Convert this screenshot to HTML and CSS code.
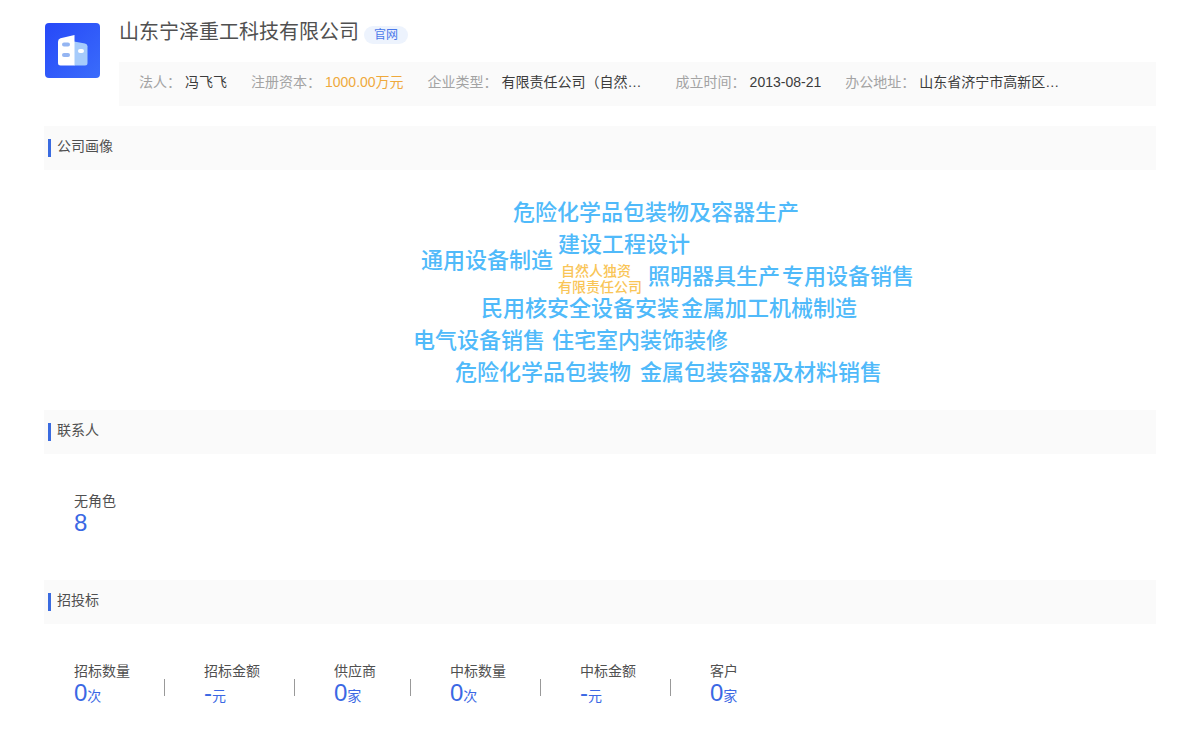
FILE: index.html
```
<!DOCTYPE html>
<html lang="zh-CN">
<head>
<meta charset="utf-8">
<title>山东宁泽重工科技有限公司</title>
<link rel="stylesheet" href="styles.css">
</head>
<body>
<main class="page">
  <header class="company">
    <svg class="logo" viewBox="0 0 55 55" aria-hidden="true">
      <defs>
        <linearGradient id="logo-bg" x1="0" y1="0" x2="1" y2="1">
          <stop offset="0" stop-color="#2648f8"/>
          <stop offset="1" stop-color="#3a6cfb"/>
        </linearGradient>
      </defs>
      <rect width="55" height="55" rx="4" fill="url(#logo-bg)"/>
      <path d="M29 18.500L40 20.500Q42.500 21 42.500 23.500V40Q42.500 42.500 40 42.500H29Z" fill="#a6cbfb"/>
      <path d="M29.500 12V42.500H15.500Q13 42.500 13 40V18.500Q13 16 15.500 15.300Z" fill="#fff"/>
      <rect x="17" y="19.500" width="8" height="4" rx="2" fill="#94b5f2"/>
      <rect x="17" y="30" width="8" height="4" rx="2" fill="#94b5f2"/>
      <rect x="33" y="26" width="6" height="4" rx="2" fill="#fff"/>
    </svg>
    <div class="company-main">
      <div class="company-title">
        <h1 class="company-name">山东宁泽重工科技有限公司</h1>
        <a class="site-tag" href="#">官网</a>
      </div>
      <dl class="facts">
        <div class="fact"><dt>法人：</dt><dd>冯飞飞</dd></div>
        <div class="fact"><dt>注册资本：</dt><dd class="money">1000.00万元</dd></div>
        <div class="fact"><dt>企业类型：</dt><dd class="wide">有限责任公司（自然…</dd></div>
        <div class="fact"><dt>成立时间：</dt><dd>2013-08-21</dd></div>
        <div class="fact"><dt>办公地址：</dt><dd class="wide">山东省济宁市高新区…</dd></div>
      </dl>
    </div>
  </header>

  <section>
    <h2 class="section-title">公司画像</h2>
    <div class="cloud-wrap">
      <div class="cloud">
        <span class="word w1">危险化学品包装物及容器生产</span>
        <span class="word w2">建设工程设计</span>
        <span class="word w3">通用设备制造</span>
        <span class="word minor w4">自然人独资</span>
        <span class="word minor w5">有限责任公司</span>
        <span class="word w6">照明器具生产</span>
        <span class="word w7">专用设备销售</span>
        <span class="word w8">民用核安全设备安装</span>
        <span class="word w9">金属加工机械制造</span>
        <span class="word w10">电气设备销售</span>
        <span class="word w11">住宅室内装饰装修</span>
        <span class="word w12">危险化学品包装物</span>
        <span class="word w13">金属包装容器及材料销售</span>
      </div>
    </div>
  </section>

  <section>
    <h2 class="section-title">联系人</h2>
    <dl class="stats">
      <div class="stat"><dt>无角色</dt><dd>8</dd></div>
    </dl>
  </section>

  <section>
    <h2 class="section-title">招投标</h2>
    <dl class="stats">
      <div class="stat"><dt>招标数量</dt><dd>0<small>次</small></dd></div>
      <div class="stat"><dt>招标金额</dt><dd>-<small>元</small></dd></div>
      <div class="stat"><dt>供应商</dt><dd>0<small>家</small></dd></div>
      <div class="stat"><dt>中标数量</dt><dd>0<small>次</small></dd></div>
      <div class="stat"><dt>中标金额</dt><dd>-<small>元</small></dd></div>
      <div class="stat"><dt>客户</dt><dd>0<small>家</small></dd></div>
    </dl>
  </section>
</main>
</body>
</html>
```
FILE: styles.css
```
* {
  box-sizing: border-box;
}

body {
  margin: 0;
  background: #fff;
  color: #505050;
  font: 14px/20px "Liberation Sans", "Noto Sans CJK SC", sans-serif;
}

h1, h2, dl, dt, dd {
  margin: 0;
  font-weight: inherit;
}

.page {
  padding: 16px 44px 0;
}

.company {
  display: flex;
  gap: 19px;
  margin-bottom: 20px;
}

.logo {
  flex: none;
  width: 55px;
  height: 55px;
  margin: 7px 0 0 1px;
}

.company-main {
  flex: 1;
  min-width: 0;
}

.company-title {
  display: flex;
  align-items: flex-end;
  gap: 5px;
  height: 28px;
  margin-bottom: 18px;
}

.company-name {
  font-size: 20px;
  line-height: 24px;
}

.site-tag {
  padding: 0 10px;
  border-radius: 9px;
  background: #edf3fd;
  color: #4a78ea;
  font-size: 12px;
  line-height: 18px;
  text-decoration: none;
}

.facts {
  display: flex;
  gap: 24px;
  padding: 10px 20px 14px;
  background: #fafafa;
}

.fact {
  display: flex;
  gap: 4px;
  white-space: nowrap;
}

.fact dt {
  color: #a3a3a3;
}

.fact dd {
  color: #3c3c3c;
}

.fact .money {
  color: #efa93c;
}

.fact .wide {
  width: 150px;
}

.section-title {
  display: flex;
  align-items: center;
  gap: 6px;
  height: 44px;
  padding: 0 4px 4px;
  background: #fafafa;
  font-size: 14px;
}

.section-title::before {
  content: "";
  width: 3px;
  height: 18px;
  margin-top: 4px;
  background: #3a6be0;
}

.cloud-wrap {
  display: flex;
  justify-content: center;
  padding: 25px 0 19px;
}

.cloud {
  position: relative;
  width: 512px;
  height: 196px;
}

.word {
  position: absolute;
  color: #50bafa;
  font-size: 22px;
  font-weight: 500;
  line-height: 32px;
  white-space: nowrap;
}

.minor {
  color: #f9c557;
  font-size: 14px;
  line-height: 16px;
}

.w1 { left: 169px; top: 2px; }
.w2 { left: 214px; top: 34px; }
.w3 { left: 77px; top: 50px; }
.w4 { left: 217px; top: 68px; }
.w5 { left: 214px; top: 84px; }
.w6 { left: 304px; top: 66px; }
.w7 { left: 438px; top: 66px; }
.w8 { left: 137px; top: 98px; }
.w9 { left: 337px; top: 98px; }
.w10 { left: 69px; top: 130px; }
.w11 { left: 208px; top: 130px; }
.w12 { left: 111px; top: 162px; }
.w13 { left: 296px; top: 162px; }

.stats {
  display: flex;
  padding: 37px 30px 43px;
}

.stat {
  display: grid;
  grid-template-columns: auto auto;
  column-gap: 34px;
}

.stat:not(:last-child)::after {
  content: "";
  grid-column: 2;
  grid-row: 1 / 3;
  align-self: center;
  width: 1px;
  height: 17px;
  margin: 6px 39px 0 0;
  background: #999;
}

.stat dd {
  grid-column: 1;
  height: 26px;
  color: #3b68e4;
  font-size: 24px;
  line-height: 24px;
}

.stat small {
  font-size: 14px;
}
```
